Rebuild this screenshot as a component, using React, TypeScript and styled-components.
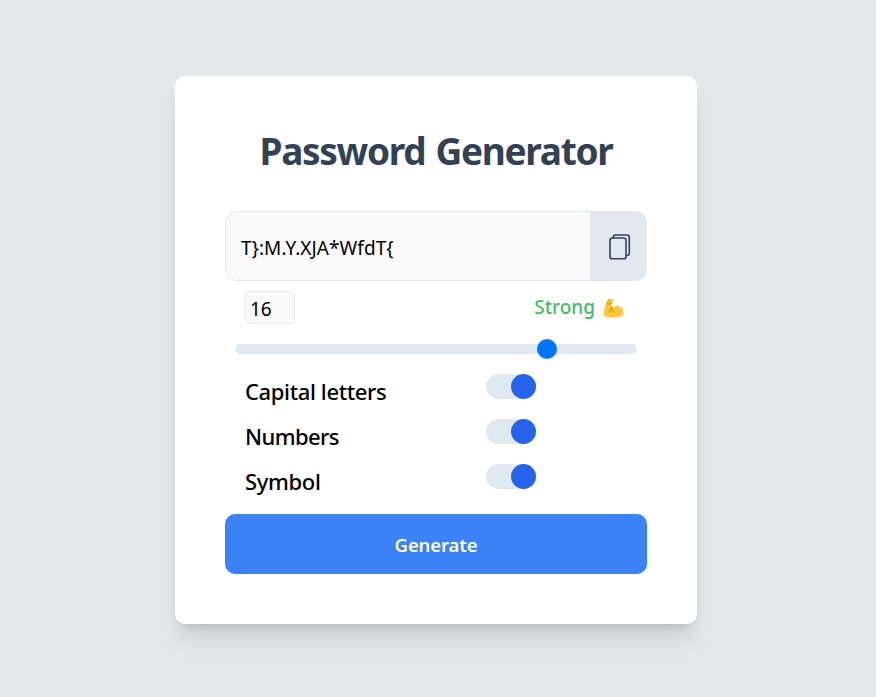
import React, { useState } from "react";
import styled, { createGlobalStyle } from "styled-components";

const GlobalStyle = createGlobalStyle`
  * { box-sizing: border-box; }
  body {
    margin: 0;
    background: #e5e7eb;
    font-family: "Segoe UI", "Noto Sans", "Open Sans", sans-serif;
    color: #000;
  }
`;

const Page = styled.main`
  min-height: 697px;
  display: flex;
  align-items: flex-start;
  justify-content: center;
  padding: 76px 4px 0 0;
`;

const Card = styled.section`
  width: 522px;
  height: 548px;
  padding: 50px;
  background: #fff;
  border-radius: 10px;
  box-shadow: 0 20px 25px -5px rgba(0, 0, 0, 0.1), 0 8px 10px -6px rgba(0, 0, 0, 0.1),
    0 10px 20px rgba(0, 0, 0, 0.02);
`;

const Title = styled.h1`
  margin: 0 0 35px;
  height: 50px;
  line-height: 50px;
  text-align: center;
  white-space: nowrap;
  font-size: 37px;
  font-weight: 700;
  letter-spacing: -1.32px;
  word-spacing: 2px;
  color: #334155;
`;

const Display = styled.div`
  display: flex;
  height: 70px;
  border-radius: 12px;
  overflow: hidden;
`;

const Password = styled.output`
  flex: 1;
  padding: 3px 15px 0;
  line-height: 66px;
  background: #fafafa;
  border: 1px solid #e5e7eb;
  border-right: 0;
  border-radius: 12px 0 0 12px;
  font-size: 19px;
  font-weight: 400;
  letter-spacing: 0.08px;
`;

const CopyButton = styled.button`
  width: 57px;
  padding: 1px 0 0 3px;
  border: 0;
  background: #e2e8f0;
  color: #334155;
  display: flex;
  align-items: center;
  justify-content: center;
`;

const Info = styled.div`
  display: flex;
  justify-content: space-between;
  margin-top: 10px;
  padding: 0 23px 0 20px;
  height: 33px;
`;

const Length = styled.div`
  width: 50px;
  height: 33px;
  padding-left: 4px;
  line-height: 34px;
  background: #fafafa;
  border: 1px solid #e5e7eb;
  border-radius: 5px;
  font-size: 19px;
  font-weight: 400;
`;

const Strength = styled.div`
  display: flex;
  align-items: center;
  gap: 8px;
  height: 32px;
  font-size: 19px;
  font-weight: 500;
  color: #48bb68;

  svg {
    margin-top: 2px;
  }
`;

const Track = styled.div`
  margin: 20px 10px 0;
  height: 10px;
  border-radius: 5px;
  background: #e2e8f0;
  display: flex;
  align-items: center;
`;

const Thumb = styled.span`
  width: 20px;
  height: 20px;
  margin-left: 302px;
  border-radius: 50%;
  background: #0075ff;
`;

const Options = styled.div`
  display: grid;
  grid-auto-rows: 45px;
  margin-top: 20px;
  padding-left: 20px;
`;

const Option = styled.div`
  display: grid;
  grid-template-columns: 241px 50px;
  align-items: start;
`;

const OptionLabel = styled.span<{ $spacing: string }>`
  line-height: 34px;
  font-size: 22px;
  font-weight: 500;
  white-space: nowrap;
  letter-spacing: ${(p) => p.$spacing};
`;

const Switch = styled.button<{ $on: boolean }>`
  width: 50px;
  height: 25px;
  padding: 0;
  border: 0;
  border-radius: 13px;
  background: #e2e8f0;
  display: flex;
  justify-content: ${(p) => (p.$on ? "flex-end" : "flex-start")};
`;

const Knob = styled.span`
  width: 25px;
  height: 25px;
  border-radius: 50%;
  background: #2563eb;
`;

const Generate = styled.button`
  display: block;
  width: 100%;
  height: 60px;
  margin-top: 5px;
  padding: 0;
  border: 0;
  border-radius: 10px;
  background: #3b82f6;
  color: #fff;
  font: 600 18.5px "Segoe UI", "Noto Sans", "Open Sans", sans-serif;
  letter-spacing: -0.1px;
`;

const CopyIcon = () => (
  <svg width="22" height="26" viewBox="0 0 22 26" fill="none" stroke="currentColor" strokeWidth="1.6">
    <rect x="1" y="4" width="16" height="20.8" rx="2.4" />
    <path d="M4.3 4V3.2Q4.3 1 6.6 1H18Q20.3 1 20.3 3.3V19.2Q20.3 21.5 18 21.5H17" />
  </svg>
);

const Biceps = () => (
  <svg width="21" height="21" viewBox="0 0 21 21">
    <path
      d="M5.4 1.1C7 .1 9 .3 9.6 1.4C10.5 3 9.9 4.3 8.7 5.1L8.2 6.6L10.2 9.5C11.6 8.2 13.3 7.6 15.2 8C18.4 8.7 20.4 11 20.4 14C20.4 17.8 17.1 19.4 11.8 19.4C7.2 19.4 3.7 19.4 1.8 18.2C.5 17.3 .6 15.9 .9 13.8C1.5 9.4 2.8 4.4 3.9 2.3C4.2 1.6 4.7 1.2 5.4 1.1Z"
      fill="#ffc83d"
    />
    <path
      d="M4.3 5.8Q6.2 6.7 8.5 5.4M5.5 2.5L6.8 4M9 10.2C8 11.4 7 12.8 5.1 14.6M8.1 9.1L9.2 12.3L11.2 14.8"
      fill="none"
      stroke="#d67d00"
      strokeWidth=".9"
      strokeLinecap="round"
    />
  </svg>
);

const OPTIONS = [
  { label: "Capital letters", spacing: "-0.37px" },
  { label: "Numbers", spacing: "-0.6px" },
  { label: "Symbol", spacing: "-0.35px" },
];

export default function App() {
  const [enabled, setEnabled] = useState([true, true, true]);
  const toggle = (i: number) => setEnabled((v) => v.map((on, j) => (j === i ? !on : on)));

  return (
    <>
      <GlobalStyle />
      <Page>
        <Card>
          <Title>Password Generator</Title>
          <Display>
            <Password>{"T}:M.Y.XJA*WfdT{"}</Password>
            <CopyButton aria-label="Copy">
              <CopyIcon />
            </CopyButton>
          </Display>
          <Info>
            <Length>16</Length>
            <Strength>
              <span>Strong</span>
              <Biceps />
            </Strength>
          </Info>
          <Track>
            <Thumb />
          </Track>
          <Options>
            {OPTIONS.map((o, i) => (
              <Option key={o.label}>
                <OptionLabel $spacing={o.spacing}>{o.label}</OptionLabel>
                <Switch $on={enabled[i]} onClick={() => toggle(i)} aria-label={o.label}>
                  <Knob />
                </Switch>
              </Option>
            ))}
          </Options>
          <Generate>Generate</Generate>
        </Card>
      </Page>
    </>
  );
}
